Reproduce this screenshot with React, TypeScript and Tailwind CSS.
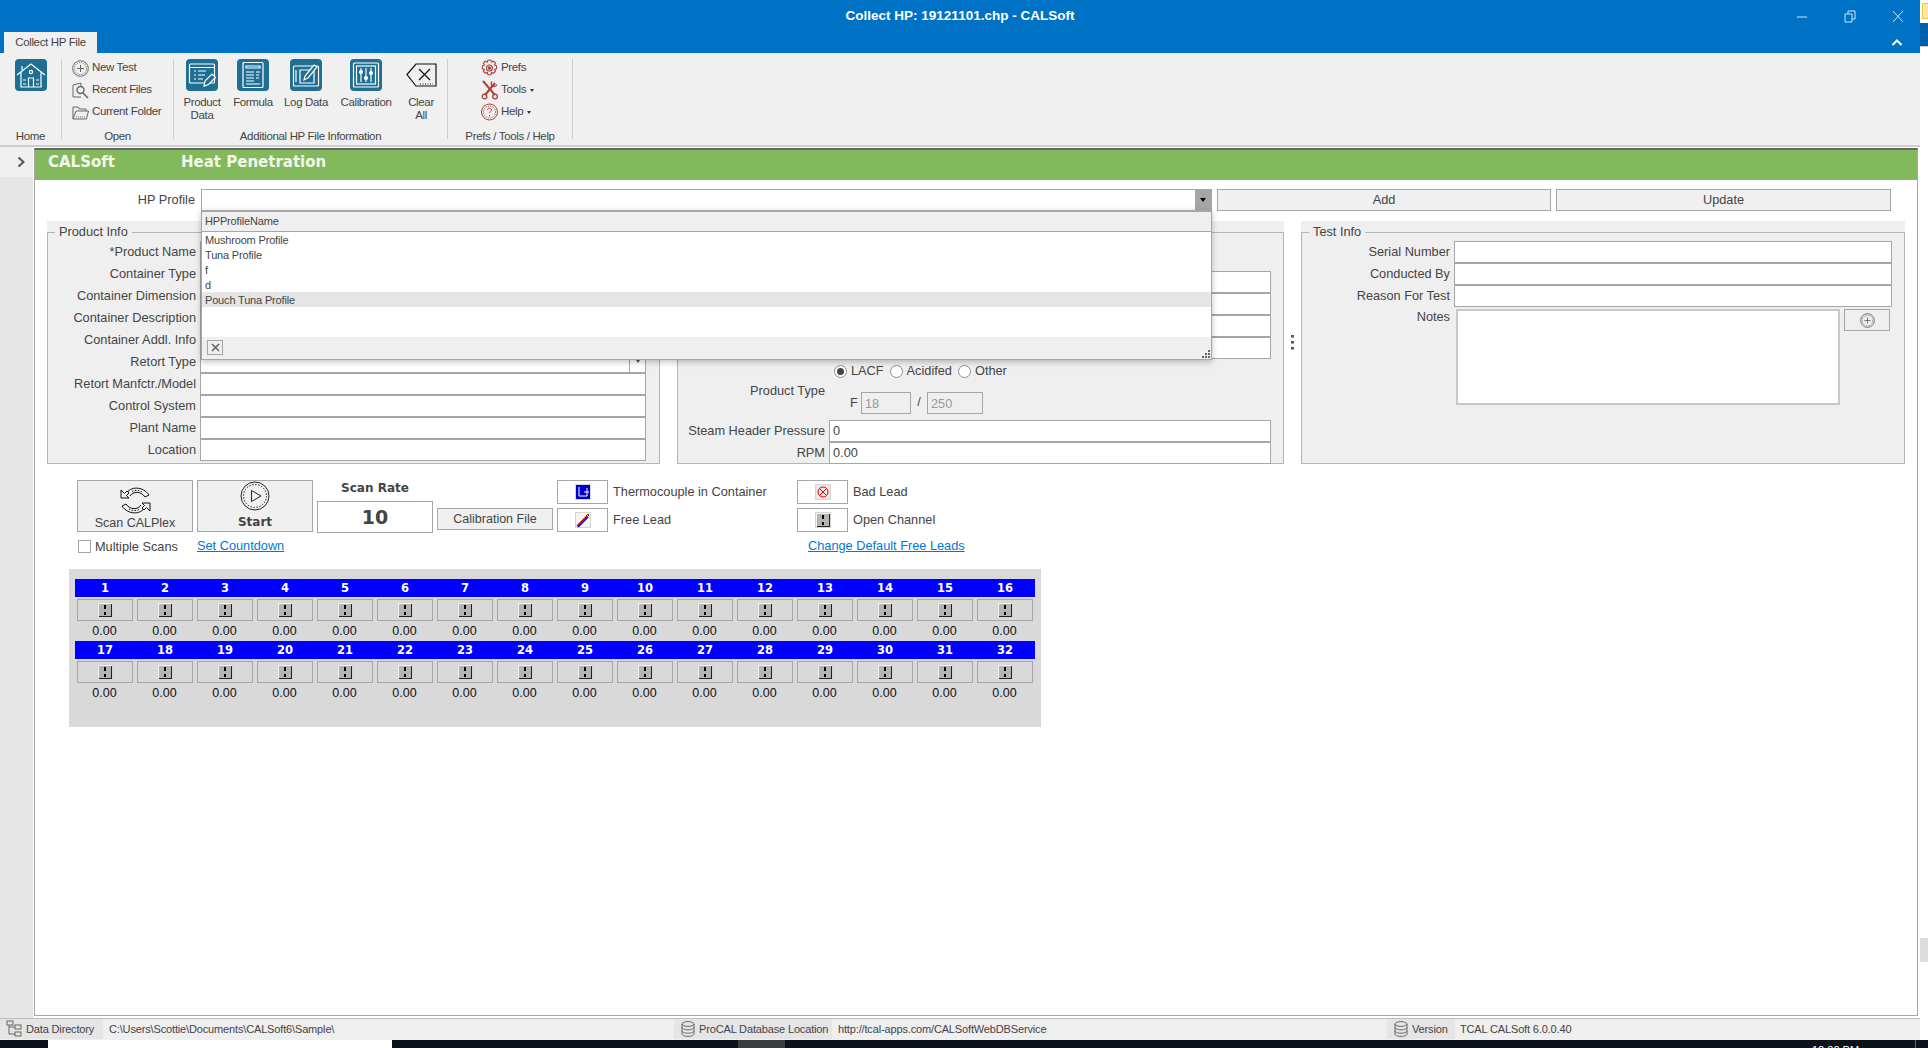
import React from "react";

const FONT = "font-['Tahoma','Liberation_Sans',sans-serif]";

// --- small drawings ---

function TealIcon({ children }: { children: React.ReactNode }) {
  return (
    <div className="w-8 h-8 rounded bg-[#1f6e93] flex items-center justify-center">
      <svg width="30" height="30" viewBox="0 0 30 30" fill="none" stroke="#fff" strokeWidth="1.2">
        {children}
      </svg>
    </div>
  );
}

function HomeIcon() {
  return (
    <TealIcon>
      <path d="M1 15 15 4l14 11M5 12v15h20V12M6 6v4" />
      <circle cx="15" cy="12" r="1.6" />
      <path d="M12.5 27v-9h5v9M7 20h3M20 20h3M7 24h3M20 24h3" />
    </TealIcon>
  );
}

function ProductDataIcon() {
  return (
    <TealIcon>
      <rect x="2.5" y="4" width="25" height="19" rx="1" />
      <path d="M3 7.5h24M7 11h2M11 11h8M7 15h2M11 15h7M7 19h2M11 19h5" />
      <path d="M17 26l1-5 7-7 3.5 3.5-7 7z" fill="#1f6e93" />
    </TealIcon>
  );
}

function FormulaIcon() {
  return (
    <TealIcon>
      <rect x="5" y="2.5" width="20" height="25" rx="1" />
      <path d="M8 6h14v2H8zM8 12h8M18 12h4M8 15h8M18 15h3M8 18h8M18 18h3M8 21h8M8 24h14" />
    </TealIcon>
  );
}

function LogDataIcon() {
  return (
    <TealIcon>
      <rect x="2.5" y="6" width="25" height="20" rx="1" />
      <path d="M5 10v12M9 10h14v13H9z" />
      <path d="M13 20l1-4 9-11 3 2-9 11z" fill="#1f6e93" />
    </TealIcon>
  );
}

function CalibrationIcon() {
  return (
    <TealIcon>
      <rect x="2.5" y="3" width="25" height="24" rx="1" />
      <rect x="5.5" y="6" width="19" height="18" />
      <path d="M10 8v14M15 8v14M20 8v14" />
      <circle cx="10" cy="12" r="1.5" fill="#fff" />
      <circle cx="15" cy="18" r="1.5" fill="#fff" />
      <circle cx="20" cy="13" r="1.5" fill="#fff" />
    </TealIcon>
  );
}

function ClearAllIcon() {
  return (
    <svg width="31" height="24" viewBox="0 0 31 24" fill="none" stroke="#111" strokeWidth="1.2">
      <path d="M1 11.5 10 1h20v22H10z" />
      <path d="M13 6l11 11M24 6 13 17" />
      <path d="M14 21h13" strokeDasharray="1 1.5" />
    </svg>
  );
}

function PlusCircle({ size = 17 }: { size?: number }) {
  return (
    <svg width={size} height={size} viewBox="0 0 17 17" fill="none" stroke="#666" strokeWidth="1">
      <circle cx="8.5" cy="8.5" r="7.8" />
      <circle cx="8.5" cy="8.5" r="6" strokeDasharray="1 1" />
      <path d="M8.5 5v7M5 8.5h7" />
    </svg>
  );
}

function RecentIcon() {
  return (
    <svg width="17" height="17" viewBox="0 0 17 17" fill="none" stroke="#666" strokeWidth="1">
      <path d="M1 3 9 1v3M1 3v12h8" />
      <circle cx="8.5" cy="8" r="3.5" strokeWidth="1.4" />
      <path d="M11 11l5 5" strokeWidth="1.6" />
    </svg>
  );
}

function FolderIcon() {
  return (
    <svg width="17" height="15" viewBox="0 0 17 15" fill="none" stroke="#666" strokeWidth="1">
      <path d="M1 14V2h5l1 2h7v2M1 14l3-8h12.5l-2 8z" />
      <path d="M4 12h9" strokeDasharray="1 1" />
    </svg>
  );
}

function GearIcon() {
  return (
    <svg width="17" height="18" viewBox="0 0 17 18" fill="none" stroke="#a8423a" strokeWidth="1.1">
      <path d="M7 1h3l.5 2 2-.8 2 2-1 1.8 2 .8v3l-2 .7 1 1.9-2 2-2-1-.5 2.3H7l-.6-2.3-2 1-2-2 1-1.900-2-.7V6.800l2-.8-1-1.800 2-2 2 .8z" />
      <circle cx="8.5" cy="9" r="3" />
      <circle cx="8.5" cy="9" r="1.2" fill="#a8423a" />
    </svg>
  );
}

function ToolsIcon() {
  return (
    <svg width="17" height="20" viewBox="0 0 17 20" fill="none" stroke="#a8423a" strokeWidth="2">
      <path d="M2 1l12 14M14 3 4 15" />
      <path d="M11 1.500c-1.500 1.500-1 3.500.5 4.500 1.500.8 3.500.2 4.500-1.500" strokeWidth="1.300" />
      <circle cx="3.500" cy="16.500" r="2.300" strokeWidth="1.300" />
      <circle cx="14" cy="16.500" r="2.300" strokeWidth="1.300" />
    </svg>
  );
}

function HelpIcon() {
  return (
    <svg width="17" height="18" viewBox="0 0 17 18" fill="none" stroke="#a8423a" strokeWidth="1">
      <circle cx="8.5" cy="9" r="8" />
      <circle cx="8.5" cy="9" r="6" strokeDasharray="1 1" />
      <path d="M6.5 7c0-2.500 4-2.500 4 0 0 1.500-2 1.500-2 3.200M8.500 12v1.400" />
    </svg>
  );
}

function ScanIcon() {
  return (
    <svg width="31" height="29" viewBox="0 0 31 29" fill="none" stroke="#111" strokeWidth="1">
      <path d="M6 8C10 0 23 0 29 9L25 11C21 5 13 5 10 10" />
      <path d="M12 5.500c3-1.500 7-1.500 10 .5" strokeDasharray="1.500 1.500" />
      <path d="M25 21C21 29 8 29 2 20L6 18C10 24 18 24 21 19" />
      <path d="M19 23.500c-3 1.500-7 1.500-10-.5" strokeDasharray="1.500 1.500" />
      <path d="M1 4v8h8L6.500 9.500 9 7 7 5 4.500 7.500z" fill="#f0f0f0" />
      <path d="M30 25v-8h-8l2.500 2.500L22 22l2 2 2.500-2.500z" fill="#f0f0f0" />
    </svg>
  );
}

function StartIcon() {
  return (
    <svg width="30" height="30" viewBox="0 0 30 30" fill="none" stroke="#222" strokeWidth="1">
      <circle cx="15" cy="15" r="14" />
      <circle cx="15" cy="15" r="11.500" strokeDasharray="1.500 1.500" />
      <path d="M11.500 9.500v11L21 15z" />
    </svg>
  );
}

function OpenChannel() {
  return (
    <svg width="16" height="16" viewBox="0 0 16 16">
      <rect width="16" height="16" fill="#d8d5cf" />
      <rect x="1" y="1" width="14" height="14" fill="#b4b4b4" />
      <path d="M1 1h14v1H2v13H1z" fill="#f4f4f4" />
      <path d="M14 2h1v13H2v-1h12z" fill="#222" />
      <path d="M7 3h2v4H7zM7 10h2v3H7z" fill="#000" />
    </svg>
  );
}

function ThermocoupleIcon() {
  return (
    <svg width="16" height="16" viewBox="0 0 16 16" fill="none">
      <rect width="16" height="16" fill="#d8d5cf" />
      <rect x="1" y="1" width="14" height="14" fill="#0000c8" />
      <path d="M4 3v9h8V4M9 8h5" stroke="#fff" strokeWidth="1" />
    </svg>
  );
}

function FreeLeadIcon() {
  return (
    <svg width="16" height="16" viewBox="0 0 16 16" fill="none">
      <rect width="16" height="16" fill="#d8d5cf" />
      <rect x="1" y="1" width="14" height="14" fill="#f5f5f5" />
      <path d="M2 14 12 4" stroke="#e00000" strokeWidth="1.6" />
      <path d="M3 15 13 5" stroke="#0000d0" strokeWidth="1.6" />
      <path d="M11 4l2-2 1 1-2 2" stroke="#333" strokeWidth="1" />
    </svg>
  );
}

function BadLeadIcon() {
  return (
    <svg width="16" height="16" viewBox="0 0 16 16" fill="none">
      <rect width="16" height="16" fill="#d8d5cf" />
      <rect x="1" y="1" width="14" height="14" fill="#e9e9e9" />
      <circle cx="8" cy="8" r="5" stroke="#f00000" strokeWidth="1" />
      <path d="M5 5l6 6M11 5l-6 6" stroke="#f00000" strokeWidth="1" />
    </svg>
  );
}

function StackIcon() {
  return (
    <svg width="14" height="16" viewBox="0 0 14 16" fill="none" stroke="#666" strokeWidth="1">
      <ellipse cx="7" cy="3" rx="6" ry="2.400" />
      <path d="M1 3v10c0 1.300 2.700 2.400 6 2.400s6-1.100 6-2.400V3M1 6.400c0 1.300 2.700 2.400 6 2.400s6-1.100 6-2.400M1 9.800c0 1.300 2.700 2.400 6 2.400s6-1.100 6-2.400" />
    </svg>
  );
}

function TreeIcon() {
  return (
    <svg width="16" height="18" viewBox="0 0 16 18" fill="none" stroke="#666" strokeWidth="1">
      <rect x="1" y="1" width="6" height="4" />
      <rect x="9" y="5" width="6" height="4" />
      <rect x="9" y="12" width="6" height="4" />
      <path d="M3 5v9h6M3 7h6" />
    </svg>
  );
}

// --- ribbon parts ---

function RibbonLarge({ icon, label, width }: { icon: React.ReactNode; label: string; width: string }) {
  return (
    <div className={`flex flex-col items-center ${width}`}>
      <div className="h-8 flex items-center justify-center">{icon}</div>
      <div className="mt-[5px] text-center leading-[13px] whitespace-pre-line">{label}</div>
    </div>
  );
}

function RibbonSmall({ icon, label, caret }: { icon: React.ReactNode; label: string; caret?: boolean }) {
  return (
    <div className="h-[22px] flex items-center">
      <div className="w-[17px] flex justify-center">{icon}</div>
      <span className="ml-[3px]">{label}</span>
      {caret && <span className="ml-[4px] mt-[1px] border-x-[2.5px] border-t-[3px] border-x-transparent border-t-[#333]" />}
    </div>
  );
}

function RibbonCaption({ label }: { label: string }) {
  return <div className="absolute inset-x-0 bottom-[-4px] text-center h-[14px] leading-[14px]">{label}</div>;
}

// --- form parts ---

function Field({ label, value, labelWidth, combo }: { label?: string; value?: string; labelWidth: string; combo?: boolean }) {
  return (
    <div className="flex h-[22px] items-center">
      <div className={`${labelWidth} shrink-0 text-right pr-[4px] whitespace-nowrap`}>{label}</div>
      <div className="flex-1 h-[22px] bg-white border border-[#a6a6a6] pl-[3px] leading-[20px] flex justify-between">
        <span>{value}</span>
        {combo && (
          <span className="w-[16px] border-l border-[#a6a6a6] flex justify-center pt-[8px]">
            <span className="h-0 border-x-[2.5px] border-t-[3px] border-x-transparent border-t-[#555]" />
          </span>
        )}
      </div>
    </div>
  );
}

function GroupBox({ title, className, children }: { title: string; className: string; children: React.ReactNode }) {
  return (
    <div className={`relative bg-[#efefef] h-[243px] ${className}`}>
      <div className="absolute inset-x-0 bottom-0 top-[11px] border border-[#b4b4b4]" />
      {title && <div className="absolute left-[8px] top-[2px] h-[18px] px-[4px] bg-[#efefef] leading-[18px]">{title}</div>}
      <div className="relative h-full">{children}</div>
    </div>
  );
}

function Radio({ label, checked }: { label: string; checked?: boolean }) {
  return (
    <div className="flex items-center">
      <span className="w-[13px] h-[13px] rounded-full border border-[#8f8f8f] bg-white flex items-center justify-center">
        {checked && <span className="w-[7px] h-[7px] rounded-full bg-[#444]" />}
      </span>
      <span className="ml-[4px]">{label}</span>
    </div>
  );
}

function LegendButton({ children }: { children: React.ReactNode }) {
  return <div className="w-[51px] h-[24px] border border-[#a6a6a6] bg-white flex items-center justify-center">{children}</div>;
}

function Channel({ index }: { index: number }) {
  return (
    <div className="w-[60px]">
      <div className="h-[18px] bg-[#0000ff] text-white font-bold text-center leading-[19px] font-['DejaVu_Sans',sans-serif] text-[11.5px]">{index}</div>
      <div className="mx-[2px] mt-[2px] w-[56px] h-[22px] border border-[#a6a6a6] flex items-center justify-center">
        <OpenChannel />
      </div>
      <div className="h-[20px] leading-[20px] text-center pr-[1px] text-[#111]">0.00</div>
    </div>
  );
}

const productLabels = [
  "*Product Name",
  "Container Type",
  "Container Dimension",
  "Container Description",
  "Container Addl. Info",
  "Retort Type",
  "Retort Manfctr./Model",
  "Control System",
  "Plant Name",
  "Location",
];

const channels = Array.from({ length: 32 }, (_, i) => i + 1);

export default function App() {
  return (
    <div className={`${FONT} w-[1928px] h-[1048px] overflow-hidden relative flex flex-col bg-white text-[12.75px] text-[#444]`}>
      {/* Right strip outside of the window */}
      <div className="absolute right-0 top-0 bottom-0 w-[8px] z-10">
        <div className="ml-[2px] mt-[3px] h-[16px] bg-[#ffe79a] border-y border-l border-[#e8c84a]" />
        <div className="mt-[4px] h-[24px] bg-[#005fa8] border-b border-[#c8c8c8]" />
        <div className="mt-[891px] h-[24px] bg-[#dcdcdc]" />
      </div>

      {/* Title bar */}
      <div className="h-[53px] shrink-0 mr-[8px] bg-[#0072c6] relative">
        <div className="h-[32px] flex items-center justify-center text-white font-bold text-[13.5px]">Collect HP: 19121101.chp - CALSoft</div>
        <div className="absolute left-[4px] top-[32px] w-[93px] h-[21px] pt-[1px] bg-[#f0f0f0] flex items-center justify-center text-[11.5px] tracking-[-0.35px]">Collect HP File</div>
        <div className="absolute left-[1796px] top-[8px] flex items-center">
          <svg width="114" height="16" viewBox="0 0 114 16" fill="none" stroke="#cfe3f3" strokeWidth="1">
            <path d="M1 9h10M49 6h7v8h-7zM52 6V3h7v8h-3M97 3l10 11M107 3 97 14" />
          </svg>
        </div>
        <div className="absolute left-[1891px] top-[38px]">
          <svg width="12" height="9" viewBox="0 0 12 9" fill="none" stroke="#fff" strokeWidth="2">
            <path d="M1.500 7 6 2.500 10.500 7" />
          </svg>
        </div>
      </div>

      {/* Ribbon */}
      <div className="h-[94px] shrink-0 mr-[8px] bg-[#f0f0f0] flex pt-[6px] border-b-2 border-[#cfcfcf] text-[11.5px] tracking-[-0.35px]">
        <div className="w-[62px] h-[80px] border-r border-[#cfcfcf] relative">
          <div className="absolute left-[15px] top-0"><HomeIcon /></div>
          <RibbonCaption label="Home" />
        </div>
        <div className="w-[112px] h-[80px] border-r border-[#cfcfcf] relative">
          <div className="pl-[10px] -mt-[2px]">
            <RibbonSmall icon={<PlusCircle />} label="New Test" />
            <RibbonSmall icon={<RecentIcon />} label="Recent Files" />
            <RibbonSmall icon={<FolderIcon />} label="Current Folder" />
          </div>
          <RibbonCaption label="Open" />
        </div>
        <div className="w-[274px] h-[80px] border-r border-[#cfcfcf] relative flex">
          <RibbonLarge icon={<ProductDataIcon />} label={"Product\nData"} width="w-[56px]" />
          <RibbonLarge icon={<FormulaIcon />} label="Formula" width="w-[46px]" />
          <RibbonLarge icon={<LogDataIcon />} label="Log Data" width="w-[60px]" />
          <RibbonLarge icon={<CalibrationIcon />} label="Calibration" width="w-[60px]" />
          <RibbonLarge icon={<ClearAllIcon />} label={"Clear\nAll"} width="w-[50px]" />
          <RibbonCaption label="Additional HP File Information" />
        </div>
        <div className="w-[125px] h-[80px] border-r border-[#cfcfcf] relative">
          <div className="pl-[33px] -mt-[2px]">
            <RibbonSmall icon={<GearIcon />} label="Prefs" />
            <RibbonSmall icon={<ToolsIcon />} label="Tools" caret />
            <RibbonSmall icon={<HelpIcon />} label="Help" caret />
          </div>
          <RibbonCaption label="Prefs / Tools / Help" />
        </div>
      </div>

      {/* Body */}
      <div className="flex-1 min-h-0 flex mr-[8px]">
        {/* Collapsed side panel */}
        <div className="w-[33px] shrink-0 mr-[1px] bg-[#e5e5e5]">
          <div className="h-[30px] bg-[#f0f0f0] flex items-center justify-end pr-[7px]">
            <svg width="9" height="12" viewBox="0 0 9 12" fill="none" stroke="#555" strokeWidth="2">
              <path d="M1.500 1.500 6.500 6l-5 4.500" />
            </svg>
          </div>
        </div>

        <div className="flex-1 flex flex-col mt-[1px] mr-[2px] mb-[2px] border-l border-r border-b border-[#a6a6a6] border-t-2 border-t-[#666]">
          {/* Green heading */}
          <div className="h-[30px] shrink-0 bg-[#82b95c] flex items-center pb-[6px] text-[#f2f8ea] font-bold text-[15px] font-['DejaVu_Sans',sans-serif]">
            <span className="ml-[13px] w-[133px]">CALSoft</span>
            <span>Heat Penetration</span>
          </div>

          <div className="relative pt-[9px] flex-1">
            {/* HP Profile row */}
            <div className="flex h-[22px] items-center">
              <div className="w-[166px] text-right pr-[6px] shrink-0">HP Profile</div>
              <div className="w-[1011px] h-[22px] bg-white border border-[#a6a6a6] flex justify-end shrink-0">
                <div className="w-[16px] bg-[#a6a6a6] flex items-center justify-center">
                  <span className="border-x-[3px] border-t-[4px] border-x-transparent border-t-black" />
                </div>
              </div>
              <div className="w-[334px] h-[22px] ml-[5px] bg-[#f0f0f0] border border-[#a6a6a6] text-center leading-[20px]">Add</div>
              <div className="w-[335px] h-[22px] ml-[5px] bg-[#f0f0f0] border border-[#a6a6a6] text-center leading-[20px]">Update</div>
            </div>

            {/* Three group boxes */}
            <div className="flex mt-[10px] ml-[12px]">
              <GroupBox title="Product Info" className="w-[613px]">
                <div className="pt-[20px] pr-[14px]">
                  {productLabels.map((label) => (
                    <Field key={label} label={label} labelWidth="w-[153px]" combo={label === "Retort Type"} />
                  ))}
                </div>
              </GroupBox>
              <div className="w-[17px]" />
              <GroupBox title="" className="w-[607px]">
                <div className="pt-[50px] pr-[13px]">
                  {[0, 1, 2, 3].map((i) => (
                    <Field key={i} labelWidth="w-[152px]" />
                  ))}
                </div>
                <div className="flex gap-[6px] pl-[157px] mt-[3px] h-[18px]">
                  <Radio label="LACF" checked />
                  <Radio label="Acidifed" />
                  <Radio label="Other" />
                </div>
                <div className="flex h-[22px] mt-[12px]">
                  <div className="w-[148px] text-right -mt-[11px]">Product Type</div>
                  <div className="ml-[25px] flex">
                    <span className="w-[11px] mt-[1px]">F</span>
                    <div className="w-[50px] h-[22px] border border-[#a6a6a6] pl-[3px] leading-[22px] text-[#999]">18</div>
                    <span className="w-[16px] text-center">/</span>
                    <div className="w-[56px] h-[22px] border border-[#a6a6a6] pl-[3px] leading-[22px] text-[#999]">250</div>
                  </div>
                </div>
                <div className="mt-[6px] pr-[13px]">
                  <Field label="Steam Header Pressure" value="0" labelWidth="w-[152px]" />
                  <Field label="RPM" value="0.00" labelWidth="w-[152px]" />
                </div>
              </GroupBox>
              <div className="w-[17px] flex justify-center">
                <svg className="mt-[114px]" width="3" height="15" viewBox="0 0 3 15" fill="#555">
                  <rect y="0" width="3" height="2.500" />
                  <rect y="6" width="3" height="2.500" />
                  <rect y="12" width="3" height="2.500" />
                </svg>
              </div>
              <GroupBox title="Test Info" className="w-[604px]">
                <div className="pt-[20px] pr-[13px]">
                  <Field label="Serial Number" labelWidth="w-[153px]" />
                  <Field label="Conducted By" labelWidth="w-[153px]" />
                  <Field label="Reason For Test" labelWidth="w-[153px]" />
                </div>
                <div className="flex mt-[2px]">
                  <div className="w-[149px] text-right -mt-[2px]">Notes</div>
                  <div className="ml-[6px] w-[384px] h-[96px] bg-white border-2 border-[#c8c8c8]" />
                  <div className="ml-[4px] w-[46px] h-[22px] border border-[#a6a6a6] flex items-center justify-center">
                    <PlusCircle size={15} />
                  </div>
                </div>
              </GroupBox>
            </div>

            {/* Scan controls */}
            <div className="flex mt-[16px] ml-[42px] h-[75px]">
              <div className="w-[116px]">
                <div className="h-[52px] bg-[#f0f0f0] border border-[#a6a6a6] flex flex-col items-center pt-[5px] text-[12.5px]">
                  <ScanIcon />
                  <span className="leading-[13px] mt-[2px]">Scan CALPlex</span>
                </div>
                <div className="flex items-center mt-[5px] ml-[1px] whitespace-nowrap">
                  <span className="w-[13px] h-[13px] border border-[#a6a6a6] bg-white" />
                  <span className="ml-[4px]">Multiple Scans</span>
                </div>
              </div>
              <div className="w-[116px] ml-[4px]">
                <div className="h-[52px] bg-[#f0f0f0] border border-[#a6a6a6] flex flex-col items-center">
                  <StartIcon />
                  <span className="font-bold leading-[13px] mt-[5px] text-[12px] font-['DejaVu_Sans',sans-serif]">Start</span>
                </div>
                <div className="mt-[4px] underline text-[#0078d7]">Set Countdown</div>
              </div>
              <div className="w-[116px] ml-[4px]">
                <div className="h-[21px] text-center font-bold leading-[16px] text-[12px] font-['DejaVu_Sans',sans-serif]">Scan Rate</div>
                <div className="h-[32px] border border-[#a6a6a6] text-center font-bold text-[19px] leading-[30px] font-['DejaVu_Sans',sans-serif]">10</div>
              </div>
              <div className="w-[116px] h-[22px] ml-[4px] mt-[28px] bg-[#f0f0f0] border border-[#a6a6a6] text-center leading-[20px] text-[12.5px]">Calibration File</div>
              <div className="ml-[4px] flex flex-col">
                <div className="flex items-center h-[24px]">
                  <LegendButton><ThermocoupleIcon /></LegendButton>
                  <span className="ml-[5px] w-[184px]">Thermocouple in Container</span>
                  <LegendButton><BadLeadIcon /></LegendButton>
                  <span className="ml-[5px]">Bad Lead</span>
                </div>
                <div className="flex items-center h-[24px] mt-[4px]">
                  <LegendButton><FreeLeadIcon /></LegendButton>
                  <span className="ml-[5px] w-[184px]">Free Lead</span>
                  <LegendButton><OpenChannel /></LegendButton>
                  <span className="ml-[5px]">Open Channel</span>
                </div>
                <div className="mt-[4px] ml-[251px] underline text-[#0078d7] whitespace-nowrap">Change Default Free Leads</div>
              </div>
            </div>

            {/* Channels */}
            <div className="ml-[34px] mt-[14px] w-[972px] h-[158px] bg-[#d9d9d9] pt-[10px] pl-[6px]">
              <div className="grid grid-cols-[repeat(16,60px)] text-[12.5px]">
                {channels.map((n) => (
                  <Channel key={n} index={n} />
                ))}
              </div>
            </div>

            {/* HP Profile dropdown */}
            <div className="absolute left-[166px] top-[30px] w-[1011px] h-[150px] bg-white border border-[#a6a6a6] border-t-2 shadow-[0_2px_6px_rgba(0,0,0,0.25)] flex flex-col text-[11px] tracking-[-0.17px] z-20">
              <div className="h-[20px] shrink-0 bg-[#efefef] border-b border-[#a6a6a6] pl-[3px] leading-[19px]">HPProfileName</div>
              {["Mushroom Profile", "Tuna Profile", "f", "d"].map((row) => (
                <div key={row} className="h-[15px] pl-[3px] leading-[16px]">{row}</div>
              ))}
              <div className="h-[15px] pl-[3px] leading-[16px] bg-[#e5e5e5]">Pouch Tuna Profile</div>
              <div className="flex-1" />
              <div className="h-[22px] bg-[#efefef] relative">
                <div className="absolute left-[5px] top-[3px] w-[16px] h-[15px] border border-[#a6a6a6] flex items-center justify-center">
                  <svg width="9" height="9" viewBox="0 0 9 9" fill="none" stroke="#555" strokeWidth="1.300">
                    <path d="M1 1l7 7M8 1 1 8" />
                  </svg>
                </div>
                <svg className="absolute right-[1px] bottom-[1px]" width="8" height="8" viewBox="0 0 8 8" fill="#666">
                  <rect x="6" y="0" width="2" height="2" />
                  <rect x="3" y="3" width="2" height="2" />
                  <rect x="6" y="3" width="2" height="2" />
                  <rect x="0" y="6" width="2" height="2" />
                  <rect x="3" y="6" width="2" height="2" />
                  <rect x="6" y="6" width="2" height="2" />
                </svg>
              </div>
            </div>
          </div>
        </div>
      </div>

      {/* Status bar */}
      <div className="h-[22px] shrink-0 mr-[8px] pb-[1px] bg-[#efefef] border-t border-[#bdbdbd] flex text-[11px] tracking-[-0.15px] whitespace-nowrap">
        <div className="w-[103px] bg-[#e5e5e5] flex items-center pl-[6px]">
          <TreeIcon />
          <span className="ml-[4px]">Data Directory</span>
        </div>
        <div className="w-[571px] flex items-center pl-[6px]">C:\Users\Scottie\Documents\CALSoft6\Sample\</div>
        <div className="w-[158px] bg-[#e5e5e5] flex items-center pl-[7px]">
          <StackIcon />
          <span className="ml-[4px]">ProCAL Database Location</span>
        </div>
        <div className="w-[555px] flex items-center pl-[6px]">http://tcal-apps.com/CALSoftWebDBService</div>
        <div className="w-[68px] bg-[#e5e5e5] flex items-center pl-[7px]">
          <StackIcon />
          <span className="ml-[4px]">Version</span>
        </div>
        <div className="flex items-center pl-[5px]">TCAL CALSoft 6.0.0.40</div>
      </div>

      {/* Taskbar, cut off by the capture */}
      <div className="h-[8px] shrink-0 bg-[#0b1219] flex overflow-hidden relative text-white text-[11px]">
        <div className="ml-[48px] w-[344px] bg-white" />
        <div className="ml-[346px] w-[47px] bg-[#3a3d40]" />
        <div className="absolute left-[1812px] top-[4px] leading-[12px]">12:00 PM</div>
        <div className="absolute left-[1915px] top-0 bottom-0 w-px bg-[#666]" />
      </div>
    </div>
  );
}
